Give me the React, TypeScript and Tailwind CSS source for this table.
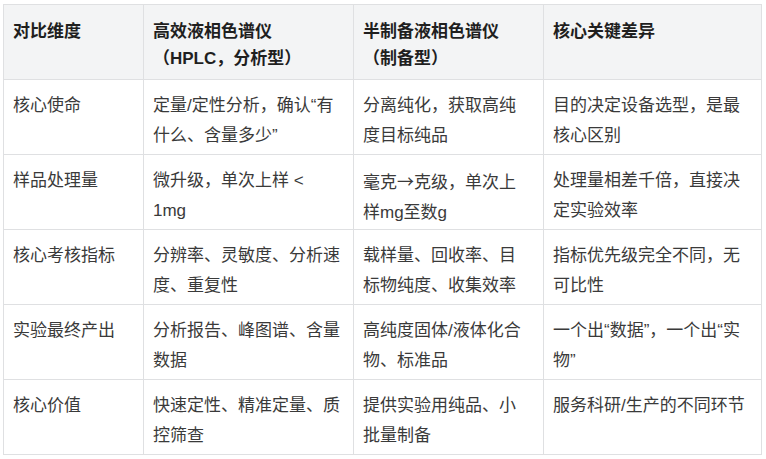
import React from "react";

const header: string[][] = [
  ["对比维度"],
  ["高效液相色谱仪", "（HPLC，分析型）"],
  ["半制备液相色谱仪", "（制备型）"],
  ["核心关键差异"],
];

const rows: React.ReactNode[][][] = [
  [["核心使命"], ["定量/定性分析，确认“有", "什么、含量多少”"], ["分离纯化，获取高纯", "度目标纯品"], ["目的决定设备选型，是最", "核心区别"]],
  [
    ["样品处理量"],
    ["微升级，单次上样 <", "1mg"],
    [
      <>
        毫克<span style={{ fontFamily: '"Noto Sans CJK SC", sans-serif' }}>→</span>克级，单次上
      </>,
      "样mg至数g",
    ],
    ["处理量相差千倍，直接决", "定实验效率"],
  ],
  [["核心考核指标"], ["分辨率、灵敏度、分析速", "度、重复性"], ["载样量、回收率、目", "标物纯度、收集效率"], ["指标优先级完全不同，无", "可比性"]],
  [["实验最终产出"], ["分析报告、峰图谱、含量", "数据"], ["高纯度固体/液体化合", "物、标准品"], ["一个出“数据”，一个出“实", "物”"]],
  [["核心价值"], ["快速定性、精准定量、质", "控筛查"], ["提供实验用纯品、小", "批量制备"], ["服务科研/生产的不同环节"]],
];

function Lines({ lines }: { lines: React.ReactNode[] }) {
  return (
    <>
      {lines.map((l, i) => (
        <React.Fragment key={i}>
          {i > 0 && <br />}
          {l}
        </React.Fragment>
      ))}
    </>
  );
}

export default function App() {
  return (
    <div
      className="w-[766px] h-[459px] bg-white pl-[3px] pt-[4px]"
      style={{ fontFamily: '"Liberation Sans", "Noto Sans CJK SC", sans-serif' }}
    >
      <div className="grid w-[759px] grid-cols-[140px_210px_190px_218px] border-l border-t border-[#dfe0e2]">
        {header.map((h, i) => (
          <div
            key={i}
            className="h-[75px] whitespace-nowrap border-b border-r border-[#dfe0e2] bg-[#f3f4f5] pl-[9px] pt-[13px] text-[17px] font-bold leading-[27px] text-[#1f1f1f]"
          >
            <Lines lines={h} />
          </div>
        ))}
        {rows.map((r, ri) =>
          r.map((c, ci) => (
            <div
              key={`${ri}-${ci}`}
              className="h-[75px] whitespace-nowrap border-b border-r border-[#dfe0e2] pl-[9px] pt-[11px] text-[17px] leading-[30px] text-[#3a3a3a]"
            >
              <Lines lines={c} />
            </div>
          ))
        )}
      </div>
    </div>
  );
}
